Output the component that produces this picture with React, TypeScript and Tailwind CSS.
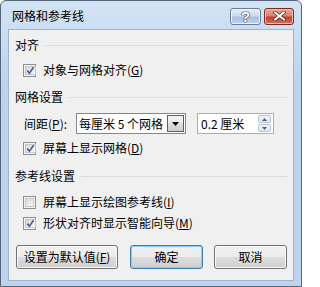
import type { ReactNode } from "react";

const font = "font-['Noto_Sans_CJK_SC','Liberation_Sans',sans-serif]";

function Check({ checked }: { checked?: boolean }) {
  return (
    <span className="flex h-[13px] w-[13px] shrink-0 border border-[#8e8f8f] bg-[#f4f4f4] p-px">
      <span className="flex flex-1 items-center justify-center border border-[#c8c8c8] bg-gradient-to-br from-[#d8d8d8] to-[#f8f8f8]">
        {checked && (
          <svg width="9" height="9" viewBox="0 0 9 9">
            <path d="M1.3 4.6 L3.4 7.2 L7.6 1.2" stroke="#4a5f97" strokeWidth="1.7" fill="none" />
          </svg>
        )}
      </span>
    </span>
  );
}

function Section({ title }: { title: string }) {
  return (
    <div className="flex h-[16px] items-center gap-[6px]">
      <span className="whitespace-nowrap">{title}</span>
      <div className="h-px flex-1 bg-[#d6dfe6]" />
    </div>
  );
}

function CheckRow({ checked, children }: { checked?: boolean; children: ReactNode }) {
  return (
    <div className="flex h-[16px] items-center gap-[7px] pl-[8px]">
      <Check checked={checked} />
      <span className="whitespace-nowrap">{children}</span>
    </div>
  );
}

function Btn({ children, primary, wide }: { children: ReactNode; primary?: boolean; wide?: boolean }) {
  return (
    <button
      className={
        (wide ? "w-[102px] " : "w-[73px] ") +
        (primary
          ? "border-[#3c7fb1] shadow-[inset_0_0_0_1px_#7dd3f7] "
          : "border-[#707070] shadow-[inset_0_0_0_1px_#fbfbfb] ") +
        "flex h-[24px] items-center justify-center rounded-[3px] border bg-[linear-gradient(#f2f2f2_0%,#ebebeb_50%,#dddddd_50%,#cfcfcf_100%)] text-[12px] text-black"
      }
    >
      {children}
    </button>
  );
}

export default function App() {
  return (
    <div className={`${font} h-[287px] w-[302px] bg-white text-[12px] leading-[16px] text-black`}>
      <div className="flex h-full w-full flex-col rounded-t-[6px] border border-[#55677a] bg-[linear-gradient(#d3e3f4,#bcd3ec_30%,#bdd4ec)] px-[7px] pb-[5px]">
        {/* title bar */}
        <div className="flex h-[28px] shrink-0 items-center justify-between">
          <span className="pl-[4px] pt-[2px] text-[12px]">网格和参考线</span>
          <div className="flex gap-[3px] pt-[2px]">
            <div className="flex h-[17px] w-[31px] items-center justify-center rounded-[3px] border border-[#6b7d93] bg-[linear-gradient(#e4eef9_0%,#c9dbef_45%,#a8c2e0_55%,#bcd3ec_100%)] shadow-[inset_0_0_0_1px_#eef4fb]">
              <span className="font-['Liberation_Sans',sans-serif] text-[15px] font-bold leading-none text-white [text-shadow:0_0_1px_#2c3e55,0_0_1px_#2c3e55,0_0_1px_#2c3e55,0_0_1px_#2c3e55]">
                ?
              </span>
            </div>
            <div className="flex h-[17px] w-[30px] items-center justify-center rounded-[3px] border border-[#7a2a22] bg-[linear-gradient(#e8a798_0%,#d88573_45%,#c2412c_55%,#d2705c_100%)] shadow-[inset_0_0_0_1px_#eebbb0]">
              <svg width="13" height="10" viewBox="0 0 13 10">
                <path d="M2 1.5 L11 8.5 M11 1.5 L2 8.5" stroke="#3a1a16" strokeWidth="3.4" strokeLinecap="square" />
                <path d="M2 1.5 L11 8.5 M11 1.5 L2 8.5" stroke="#ffffff" strokeWidth="2" strokeLinecap="square" />
              </svg>
            </div>
          </div>
        </div>

        {/* client area */}
        <div className="flex flex-1 flex-col border border-[#9fb4ca] bg-[#f0f0f0] px-[6px] pt-[7px]">
          <Section title="对齐" />
          <div className="mt-[9px]">
            <CheckRow checked>
              对象与网格对齐(<u>G</u>)
            </CheckRow>
          </div>

          <div className="mt-[11px]">
            <Section title="网格设置" />
          </div>
          <div className="mt-[8px] flex h-[21px] items-center pl-[9px]">
            <span className="w-[52px] whitespace-nowrap">
              间距(<u>P</u>):
            </span>
            <div className="flex h-[21px] w-[110px] items-center border border-[#828790] bg-white">
              <span className="flex-1 whitespace-nowrap pl-[2px]">每厘米 5 个网格</span>
              <div className="mr-px flex h-[17px] w-[17px] items-center justify-center border border-[#5f5f5f] bg-[linear-gradient(#f2f2f2_0%,#ebebeb_50%,#dddddd_50%,#cfcfcf_100%)]">
                <svg width="7" height="4" viewBox="0 0 7 4">
                  <path d="M0 0 H7 L3.5 4 Z" fill="#000" />
                </svg>
              </div>
            </div>
            <div className="ml-[11px] flex h-[21px] w-[77px] items-center border border-[#abadb3] bg-white">
              <span className="flex-1 whitespace-nowrap pl-[3px]">0.2 厘米</span>
              <div className="mr-[2px] flex w-[13px] flex-col gap-px">
                <div className="flex h-[8px] items-center justify-center rounded-[2px] border border-[#b5c3d3] bg-[linear-gradient(#f3f6f9,#dde5ee)]">
                  <svg width="5" height="3" viewBox="0 0 5 3">
                    <path d="M0 3 H5 L2.5 0 Z" fill="#4d6185" />
                  </svg>
                </div>
                <div className="flex h-[8px] items-center justify-center rounded-[2px] border border-[#b5c3d3] bg-[linear-gradient(#f3f6f9,#dde5ee)]">
                  <svg width="5" height="3" viewBox="0 0 5 3">
                    <path d="M0 0 H5 L2.5 3 Z" fill="#4d6185" />
                  </svg>
                </div>
              </div>
            </div>
          </div>
          <div className="mt-[6px]">
            <CheckRow checked>
              屏幕上显示网格(<u>D</u>)
            </CheckRow>
          </div>

          <div className="mt-[12px]">
            <Section title="参考线设置" />
          </div>
          <div className="mt-[10px]">
            <CheckRow>
              屏幕上显示绘图参考线(<u>I</u>)
            </CheckRow>
          </div>
          <div className="mt-[5px]">
            <CheckRow checked>
              形状对齐时显示智能向导(<u>M</u>)
            </CheckRow>
          </div>

          <div className="mt-[14px] flex gap-[11px] pl-px">
            <Btn wide>
              设置为默认值(<u>F</u>)
            </Btn>
            <div className="ml-px">
              <Btn primary>确定</Btn>
            </div>
            <Btn>取消</Btn>
          </div>
        </div>
      </div>
    </div>
  );
}
